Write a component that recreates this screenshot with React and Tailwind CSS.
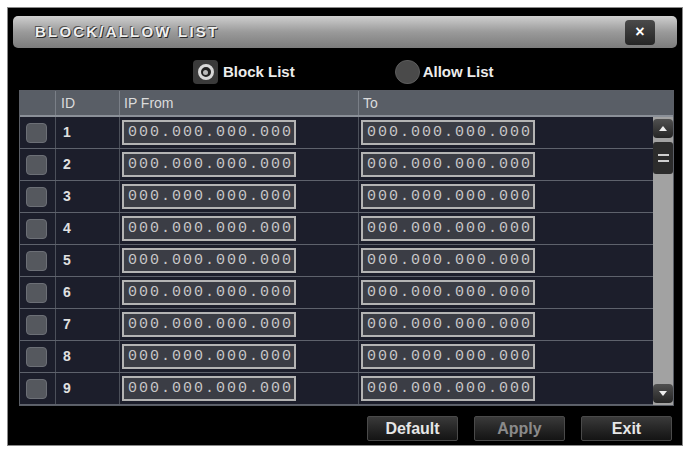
import React, { useState } from 'react';

const ROWS = [1, 2, 3, 4, 5, 6, 7, 8, 9];

const IpBox = ({ value }) => (
  <div className="w-[174px] h-[25px] border-2 border-[#b4b4b4] bg-[#3b3d45] flex items-center pl-[4px] font-['Liberation_Mono',monospace] text-[15px] tracking-[2px] text-[#c8c8c8] leading-none">
    {value}
  </div>
);

const FooterButton = ({ label, disabled }) => (
  <button
    className={`h-[25px] w-[91px] rounded-[2px] border border-[#4a4a4a] bg-gradient-to-b from-[#3a3a3a] to-[#141414] text-[16px] font-bold ${
      disabled ? 'text-[#8a8a8a]' : 'text-[#e6e6e6]'
    }`}
  >
    {label}
  </button>
);

const App = () => {
  const [mode, setMode] = useState('block');

  return (
    <div className="w-[687px] h-[451px] bg-white pt-[7px] pl-[7px] font-['Liberation_Sans',Arial,sans-serif]">
      <div className="w-[676px] h-[439px] bg-black border border-[#8a8a8a] px-[5px] pt-[8px] flex flex-col">
        {/* title bar */}
        <div className="h-[32px] rounded-[5px] bg-gradient-to-b from-[#cfcfcf] via-[#9a9a9a] to-[#7c7c7c] flex items-center justify-between pl-[22px] pr-[22px]">
          <span className="text-[15px] font-bold tracking-[2.2px] text-[#efefef] [text-shadow:1px_1px_0_#2a2a2a,-1px_-1px_0_#555]">
            BLOCK/ALLOW LIST
          </span>
          <button className="w-[30px] h-[25px] rounded-[4px] bg-gradient-to-b from-[#4a4a4a] to-[#262626] flex items-center justify-center text-white text-[16px] font-bold leading-none">
            ×
          </button>
        </div>

        {/* list type */}
        <div className="h-[42px] flex items-center pt-[6px]">
          <button onClick={() => setMode('block')} className="ml-[180px] flex items-center gap-[5px]">
            <span className="w-[25px] h-[24px] rounded-[4px] bg-[#3a3a3a] flex items-center justify-center">
              <span className="w-[16px] h-[16px] rounded-full border-[3px] border-[#d8d8d8] bg-[#222] flex items-center justify-center">
                {mode === 'block' && <span className="w-[5px] h-[5px] rounded-full bg-[#bbb]" />}
              </span>
            </span>
            <span className="text-[15px] font-bold text-[#ececec]">Block List</span>
          </button>
          <button onClick={() => setMode('allow')} className="ml-[100px] flex items-center gap-[3px]">
            <span className="w-[25px] h-[24px] rounded-full bg-[#4a4a4a] border border-[#5c5c5c]" />
            <span className="text-[15px] font-bold text-[#ececec]">Allow List</span>
          </button>
        </div>

        {/* table */}
        <div className="ml-[6px] w-[655px] border border-[#5a5e66]">
          <div className="h-[26px] bg-[#595e66] border-b-2 border-[#8b9098] flex items-center text-[14px] text-[#dcdcdc]">
            <div className="w-[36px] h-full border-r border-[#7a7f87]" />
            <div className="w-[63px] pl-[5px]">ID</div>
            <div className="w-[239px] pl-[4px] h-full flex items-center border-l border-[#7a7f87]">IP From</div>
            <div className="flex-1 pl-[4px] h-full flex items-center border-l border-[#7a7f87]">To</div>
          </div>
          <div className="flex">
            <div className="w-[634px]">
              {ROWS.map((n) => (
                <div key={n} className="h-[32px] bg-[#1c1e2b] border-b border-[#5e626c] flex items-center">
                  <div className="w-[36px] h-full border-r border-[#4c505a] flex items-center pl-[6px]">
                    <span className="w-[21px] h-[20px] rounded-[4px] bg-[#55585e] border border-[#6c6f76]" />
                  </div>
                  <div className="w-[63px] pl-[7px] text-[14px] font-bold text-[#e0e0e0]">{n}</div>
                  <div className="w-[239px] h-full flex items-center pl-[2px] border-l border-[#4c505a]">
                    <IpBox value="000.000.000.000" />
                  </div>
                  <div className="flex-1 h-full flex items-center pl-[2px] border-l border-[#4c505a]">
                    <IpBox value="000.000.000.000" />
                  </div>
                </div>
              ))}
            </div>
            {/* scrollbar */}
            <div className="w-[20px] bg-[#a2a2a2] flex flex-col justify-between py-[2px]">
              <div className="flex flex-col gap-[4px]">
                <div className="h-[19px] rounded-[4px] bg-gradient-to-b from-[#505050] to-[#262626] flex items-center justify-center">
                  <svg width="10" height="7" viewBox="0 0 10 7">
                    <path d="M1 6 L5 1 L9 6 Z" fill="#eee" />
                  </svg>
                </div>
                <div className="h-[32px] rounded-[3px] bg-[#2c2c2c] flex flex-col items-center justify-center gap-[4px]">
                  <span className="w-[11px] h-[2px] bg-[#cfcfcf]" />
                  <span className="w-[11px] h-[2px] bg-[#cfcfcf]" />
                </div>
              </div>
              <div className="h-[19px] rounded-[4px] bg-gradient-to-b from-[#505050] to-[#262626] flex items-center justify-center">
                <svg width="10" height="7" viewBox="0 0 10 7">
                  <path d="M1 1 L5 6 L9 1 Z" fill="#eee" />
                </svg>
              </div>
            </div>
          </div>
        </div>

        {/* footer */}
        <div className="flex justify-end gap-[16px] pr-[5px] mt-[10px]">
          <FooterButton label="Default" />
          <FooterButton label="Apply" disabled />
          <FooterButton label="Exit" />
        </div>
      </div>
    </div>
  );
};

export default App;
